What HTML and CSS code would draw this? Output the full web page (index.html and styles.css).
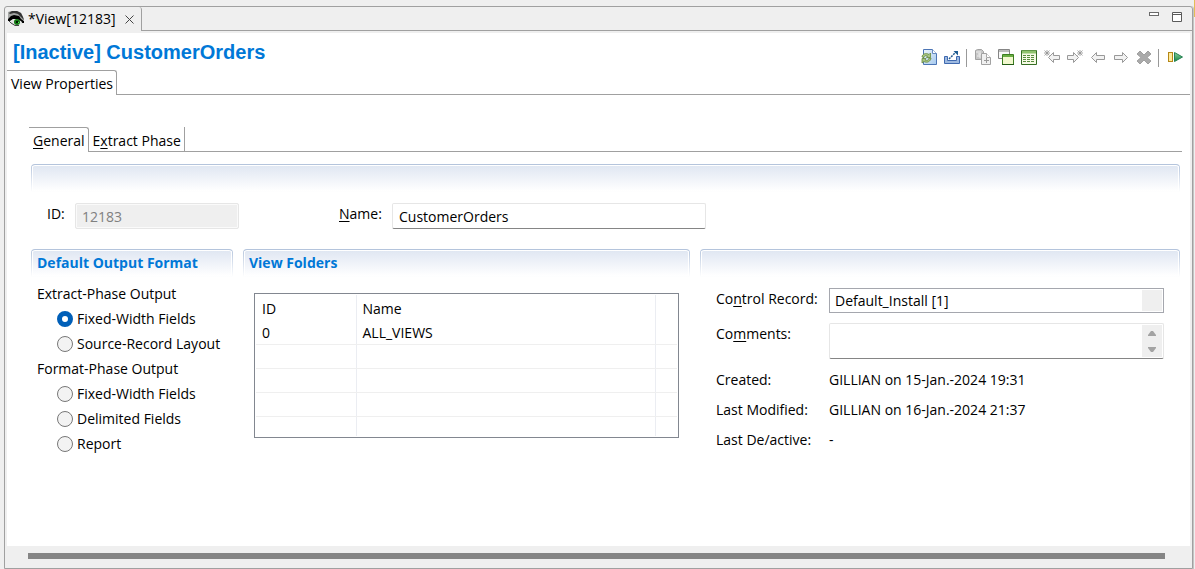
FILE: index.html
```html
<!DOCTYPE html>
<html lang="en">
<head>
<meta charset="utf-8">
<title>View[12183]</title>
<link rel="stylesheet" href="styles.css">
</head>
<body>
<div class="window">
  <header class="tabbar">
    <div class="editor-tab">
      <svg class="eye" width="16" height="16" viewBox="0 0 16 16" aria-hidden="true">
        <path d="M0 4V1L3 0H9L13 2L15 6L16 9H12L8 6H3L0 8Z" fill="#a5a7a5"/>
        <path d="M4 0H9L13 2L15 6L16 9L10 3L6 2L2 3L1 2Z" fill="#333"/>
        <path d="M0 8L3 5L6 4L11 5L13 8L16 10V12H13L13 11L9 8L5 8L2 10H0Z" fill="#000"/>
        <path d="M4 9L8 8L13 10L15 13L8 15L3 13Z" fill="#e4e6e4"/>
        <circle cx="9" cy="11" r="3" fill="#147a14"/>
        <rect x="8" y="10" width="2" height="2" fill="#001a00"/>
        <rect x="10" y="11" width="1" height="1" fill="#5ce85c"/>
        <path d="M1 10L3 12L7 14.500H11" fill="none" stroke="#444"/>
      </svg>
      <span>*View[12183]</span>
      <button class="close" aria-label="Close"><svg width="9" height="9" viewBox="0 0 9 9"><path d="M.5 .5L8.500 8.500M8.500 .5L.5 8.500" stroke="#444" fill="none"/></svg></button>
    </div>
    <div class="tabbar-rest">
      <button aria-label="Minimize"><svg width="10" height="10" viewBox="0 0 10 10"><rect x=".5" y=".5" width="9" height="3" fill="#fff" stroke="#6a6a6a"/></svg></button>
      <button aria-label="Maximize"><svg width="10" height="10" viewBox="0 0 10 10"><path d="M.5 .5H9.500V9.500H.5ZM.5 2.500H9.500" fill="#fff" stroke="#5a5a5a"/></svg></button>
    </div>
  </header>
  <main class="content">
    <div class="heading">
      <h1>[Inactive] CustomerOrders</h1>
      <div class="toolbar">
        <button aria-label="Refresh"><svg width="16" height="16" viewBox="0 0 16 16"><defs><linearGradient id="pg" x2="1" y2="1"><stop stop-color="#eef5fc"/><stop offset="1" stop-color="#a5c9ee"/></linearGradient><linearGradient id="gr" x2="0" y2="1"><stop stop-color="#91d49c"/><stop offset="1" stop-color="#128344"/></linearGradient></defs><path d="M2.500 .5H11.500L15.500 4.500V15.500H2.500Z" fill="url(#pg)" stroke="#4c75b5"/><path d="M11.500 .5V4.500H15.500" fill="#fff" stroke="#668bc2"/><path d="M1 8C1 5 5 3.500 8 5.500L9.500 4V8.500H5.500L6.500 7C4 6 3 7.500 3 8.500Z" fill="#a8c582" stroke="#67893e" stroke-width=".8"/><path d="M10 9C10 12 6 14.500 3 12.500L1 14V9.500H5L4 11C6 12 8 11 8 9Z" fill="#a8c582" stroke="#67893e" stroke-width=".8"/></svg></button>
        <button aria-label="Export"><svg width="16" height="16" viewBox="0 0 16 16"><path d="M.5 7.500H3.500V11.500H12.500V7.500H15.500V14.500H.5Z" fill="#9db9e0" stroke="#3f69af"/><path d="M5 10L12 3" stroke="#245b91" stroke-width="1.500" stroke-dasharray="2 1"/><path d="M9.500 2H14V6.500Z" fill="#1b5a90"/></svg></button>
        <span class="sep"></span>
        <button aria-label="Copy"><svg width="16" height="16" viewBox="0 0 16 16"><path d="M.5 1.500L2.500 .5H6.500L8.500 2.500V10.500H.5Z" fill="#c6c6c6" stroke="#a2a2a2"/><path d="M1 3H4M3 5H7M2 7H5M5 2V9" stroke="#eee"/><path d="M6.500 4.500H11.500L15.500 8.500V15.500H6.500Z" fill="#f0f0f0" stroke="#a2a2a2"/><path d="M11.500 4.500V8.500H15.500" fill="#fff" stroke="#aaa"/><path d="M9 11.500H14M11.500 9V14" stroke="#999"/></svg></button>
        <button aria-label="Windows"><svg width="16" height="16" viewBox="0 0 16 16"><path d="M.5 .5H11.500V9.500H.5Z" fill="#f8f8f8" stroke="#858585"/><path d="M1 2H11" stroke="#bbb" stroke-width="2"/><path d="M4.500 5.500H15.500V15.500H4.500Z" fill="#f2f8cf" stroke="#3c7e20"/><path d="M5 7H15" stroke="#69ad42" stroke-width="2"/><path d="M4 15.500H16" stroke="#245d16"/></svg></button>
        <button aria-label="Table"><svg width="16" height="16" viewBox="0 0 16 16"><path d="M.5 1.500H15.500V15.500H.5Z" fill="#f5fae5" stroke="#356d23"/><path d="M1 3H15" stroke="#8fc36d" stroke-width="3"/><path d="M2 6.500H14M2 8.500H14M2 10.500H14M2 12.500H14" stroke="#588b3d" stroke-dasharray="3 1"/></svg></button>
        <button aria-label="Previous edit"><svg width="16" height="16" viewBox="0 0 16 16"><path d="M4.500 8.500L9.500 3.500V6.500H15.500V10.500H9.500V13.500Z" fill="#f2f2f2" stroke="#999"/><path d="M.5 1.500L5.500 6.500M5.500 1.500L.5 6.500M3 1V7M0 4H6" stroke="#929292" stroke-width=".8"/></svg></button>
        <button aria-label="Next edit"><svg width="16" height="16" viewBox="0 0 16 16"><path d="M11.500 8.500L6.500 3.500V6.500H.5V10.500H6.500V13.500Z" fill="#f2f2f2" stroke="#999"/><path d="M10.500 1.500L15.500 6.500M15.500 1.500L10.500 6.500M13 1V7M10 4H16" stroke="#929292" stroke-width=".8"/></svg></button>
        <button aria-label="Back"><svg width="16" height="16" viewBox="0 0 16 16"><path d="M1.500 8.500L6.500 3.500V6.500H14.500V10.500H6.500V13.500Z" fill="#f2f2f2" stroke="#999"/></svg></button>
        <button aria-label="Forward"><svg width="16" height="16" viewBox="0 0 16 16"><path d="M14.500 8.500L9.500 3.500V6.500H1.500V10.500H9.500V13.500Z" fill="#f2f2f2" stroke="#999"/></svg></button>
        <button aria-label="Delete"><svg width="16" height="16" viewBox="0 0 16 16"><path d="M4 2L8 6L12 2L15 5L11 8.500L15 12L12 15L8 11L4 15L1 12L5 8.500L1 5Z" fill="#aaa" stroke="#a0a0a0"/></svg></button>
        <span class="sep"></span>
        <button aria-label="Activate"><svg width="16" height="16" viewBox="0 0 16 16"><rect x="1.500" y="3.500" width="4" height="9" fill="#ffeb9b" stroke="#b58716"/><path d="M7.500 3.500L15.500 8L7.500 12.500Z" fill="url(#gr)" stroke="#258153"/></svg></button>
      </div>
    </div>
    <div class="tabs" role="tablist">
      <button class="tab selected" role="tab" aria-selected="true">View Properties</button>
      <span class="tabs-line"></span>
    </div>
    <div class="page">
      <div class="tabs" role="tablist">
        <button class="tab selected" role="tab" aria-selected="true"><u>G</u>eneral</button>
        <button class="tab other" role="tab" aria-selected="false">E<u>x</u>tract Phase</button>
        <span class="tabs-line"></span>
      </div>
      <form class="form">
        <div class="band"></div>
        <div class="identity">
          <label for="id">ID:</label>
          <input class="text id" id="id" value="12183" disabled>
          <label class="name-label" for="name"><u>N</u>ame:</label>
          <input class="text name" id="name" value="CustomerOrders">
        </div>
        <div class="sections">
          <section>
            <h2 class="band">Default Output Format</h2>
            <div class="formats">
              <fieldset>
                <legend>Extract-Phase Output</legend>
                <label><input type="radio" name="extract" checked>Fixed-Width Fields</label>
                <label><input type="radio" name="extract">Source-Record Layout</label>
              </fieldset>
              <fieldset>
                <legend>Format-Phase Output</legend>
                <label><input type="radio" name="format">Fixed-Width Fields</label>
                <label><input type="radio" name="format">Delimited Fields</label>
                <label><input type="radio" name="format">Report</label>
              </fieldset>
            </div>
          </section>
          <section>
            <h2 class="band">View Folders</h2>
            <div class="folders">
              <table>
                <thead><tr><th class="c-id">ID</th><th>Name</th><th class="c-end"></th></tr></thead>
                <tbody>
                  <tr><td>0</td><td>ALL_VIEWS</td><td></td></tr>
                  <tr><td></td><td></td><td></td></tr>
                  <tr><td></td><td></td><td></td></tr>
                  <tr><td></td><td></td><td></td></tr>
                  <tr><td></td><td></td><td></td></tr>
                </tbody>
              </table>
            </div>
          </section>
          <section>
            <div class="band"></div>
            <div class="details">
              <label for="record">Co<u>n</u>trol Record:</label>
              <select id="record"><option>Default_Install [1]</option></select>
              <label for="comments">Co<u>m</u>ments:</label>
              <div class="comments">
                <textarea id="comments" rows="1"></textarea>
                <div class="arrows" aria-hidden="true">
                  <svg width="10" height="7" viewBox="0 0 10 7"><path d="M1 6H9V5L6 1H4L1 5Z" fill="#a3a3a3"/></svg>
                  <svg width="10" height="7" viewBox="0 0 10 7"><path d="M1 1H9V2L6 6H4L1 2Z" fill="#a3a3a3"/></svg>
                </div>
              </div>
              <span class="info">Created:</span><span class="info">GILLIAN on 15-Jan.-2024 19:31</span>
              <span class="info">Last Modified:</span><span class="info">GILLIAN on 16-Jan.-2024 21:37</span>
              <span class="info">Last De/active:</span><span class="info">-</span>
            </div>
          </section>
        </div>
      </form>
    </div>
  </main>
  <footer class="scrollbar"><div class="thumb"></div></footer>
</div>
<div class="neighbour"></div>
</body>
</html>
```
FILE: styles.css
```css
* { box-sizing: border-box; }
body {
  margin: 0;
  min-height: 100vh;
  display: flex;
  padding: 6px 0 0 4px;
  background: #efefef;
  color: #000;
  font: 14px/20px "Open Sans", sans-serif;
}
button, input, select, textarea { font: inherit; color: inherit; }
button { margin: 0; padding: 0; border: 0; background: none; display: flex; }
svg { display: block; }
u { text-underline-offset: 2px; }
.window {
  flex: 1;
  display: flex;
  flex-direction: column;
  border: 1px solid #a0a0a0;
  border-radius: 3px 3px 0 0;
  box-shadow: 1px 0 #c4c4c4;
}
.neighbour {
  width: 1px;
  height: 17px;
  margin: -6px 0 0 1px;
  background: #e3bd55;
}
.tabbar { display: flex; height: 24px; }
.editor-tab {
  display: flex;
  align-items: center;
  gap: 4px;
  padding: 0 7px 0 3px;
  border-right: 1px solid #a0a0a0;
  border-radius: 0 3px 0 0;
}
.close { margin-left: 5px; }
.tabbar-rest {
  flex: 1;
  display: flex;
  justify-content: flex-end;
  gap: 13px;
  padding: 5px 10px 0 0;
  border-bottom: 1px solid #a0a0a0;
}
.content { flex: 1; margin: 2px 2px 0; background: #fff; }
.heading { display: flex; justify-content: space-between; height: 37px; padding: 0 7px 0 6px; }
h1 {
  margin: 7px 0 0;
  color: #0078d7;
  font: bold 20px/24px "Liberation Sans", sans-serif;
}
.toolbar { display: flex; gap: 7px; margin-top: 16px; }
.sep { width: 1px; height: 18px; margin: 0 1px 0 -1px; background: #999; }
.tabs { display: flex; height: 25px; }
.tab { align-items: center; padding: 0 4px; }
.tab.selected {
  border: 1px solid #a0a0a0;
  border-width: 1px 1px 0 0;
  border-radius: 0 3px 0 0;
  padding: 1px 3px 0 4px;
}
.tab.other { border: 1px solid #a0a0a0; border-width: 0 1px 1px 0; padding: 3px 3px 0 4px; }
.tabs-line { flex: 1; border-bottom: 1px solid #a0a0a0; }
.page { padding: 32px 8px 0 22px; }
.form { padding: 12px 2px 0; }
.band {
  height: 28px;
  margin: 0;
  padding: 3px 5px;
  border: 1px solid transparent;
  border-top-color: #b4c4dc;
  border-radius: 4px 4px 0 0;
  background:
    linear-gradient(#dfe6f2, #fff 26px) padding-box,
    linear-gradient(#b4c4dc, #fff) border-box;
  box-shadow: inset 0 1px #fff, inset 1px 0 #fff, inset -1px 0 #fff;
  color: #0078d7;
  font-size: 14px;
  line-height: 20px;
  font-weight: bold;
}
.identity { display: flex; align-items: flex-start; padding: 11px 16px 0; height: 57px; }
.identity label { width: 28px; padding-top: 1px; }
.identity .name-label { width: 53px; margin-left: 100px; }
.text {
  height: 26px;
  padding: 0 6px;
  border: 1px solid #e6e6e6;
  border-bottom-color: #858585;
  border-radius: 2px;
  background: #fff;
}
.text:disabled { border-color: #e6e6e6; background: #efefef; color: #808080; box-shadow: inset 0 0 0 1px #fafafa; }
.id { width: 164px; }
.name { width: 314px; }
.sections { display: grid; grid-template-columns: 202px 447fr 480fr; gap: 10px; }
.formats { padding: 4px 6px; }
fieldset { display: flex; flex-direction: column; margin: 0; padding: 0; border: 0; }
legend { padding: 0; line-height: 25px; }
.formats label { display: flex; align-items: center; gap: 4px; height: 25px; padding-left: 20px; white-space: nowrap; }
input[type=radio] {
  appearance: none;
  width: 16px;
  height: 16px;
  margin: 0;
  border: 1px solid #777;
  border-radius: 50%;
  background: #f3f3f3;
}
input[type=radio]:checked { border: 5px solid #005fb8; background: #fff; }
.folders { margin: 16px 11px 0; border: 1px solid #828790; padding: 1px; }
table { width: 100%; border-collapse: collapse; table-layout: fixed; }
th, td {
  height: 24px;
  padding: 0 6px;
  border-right: 1px solid #ebedf2;
  border-bottom: 1px solid #efefef;
  text-align: left;
  font-weight: normal;
}
th { height: 25px; padding-top: 2px; border-bottom: 0; }
td { padding-top: 3px; }
th:last-child, td:last-child { border-right: 0; }
tr:last-child td { height: 20px; border-bottom: 0; }
.c-id { width: 100px; }
.c-end { width: 22px; }
.details {
  display: grid;
  grid-template-columns: 113px 1fr;
  padding: 11px 16px 0;
}
.details label { padding-top: 1px; }
select {
  appearance: none;
  height: 25px;
  margin-bottom: 10px;
  padding: 1px 5px 0;
  border: 1px solid #a5a7ae;
  border-radius: 0;
  background: linear-gradient(#efefef, #efefef) right 1px center / 20px 21px no-repeat #fff;
}
.comments {
  display: flex;
  height: 36px;
  margin-bottom: 11px;
  padding: 1px;
  border: 1px solid #e6e6e6;
  border-bottom-color: #858585;
  border-radius: 2px;
}
textarea { flex: 1; border: 0; margin: 0; padding: 4px; resize: none; overflow: hidden; }
.arrows {
  width: 20px;
  display: flex;
  flex-direction: column;
  align-items: center;
  justify-content: space-between;
  padding: 5px 0 4px;
  background: #efefef;
}
.info { height: 30px; }
.scrollbar { height: 22px; padding: 7px 27px 0 23px; }
.thumb { height: 6px; background: #858585; }
```
